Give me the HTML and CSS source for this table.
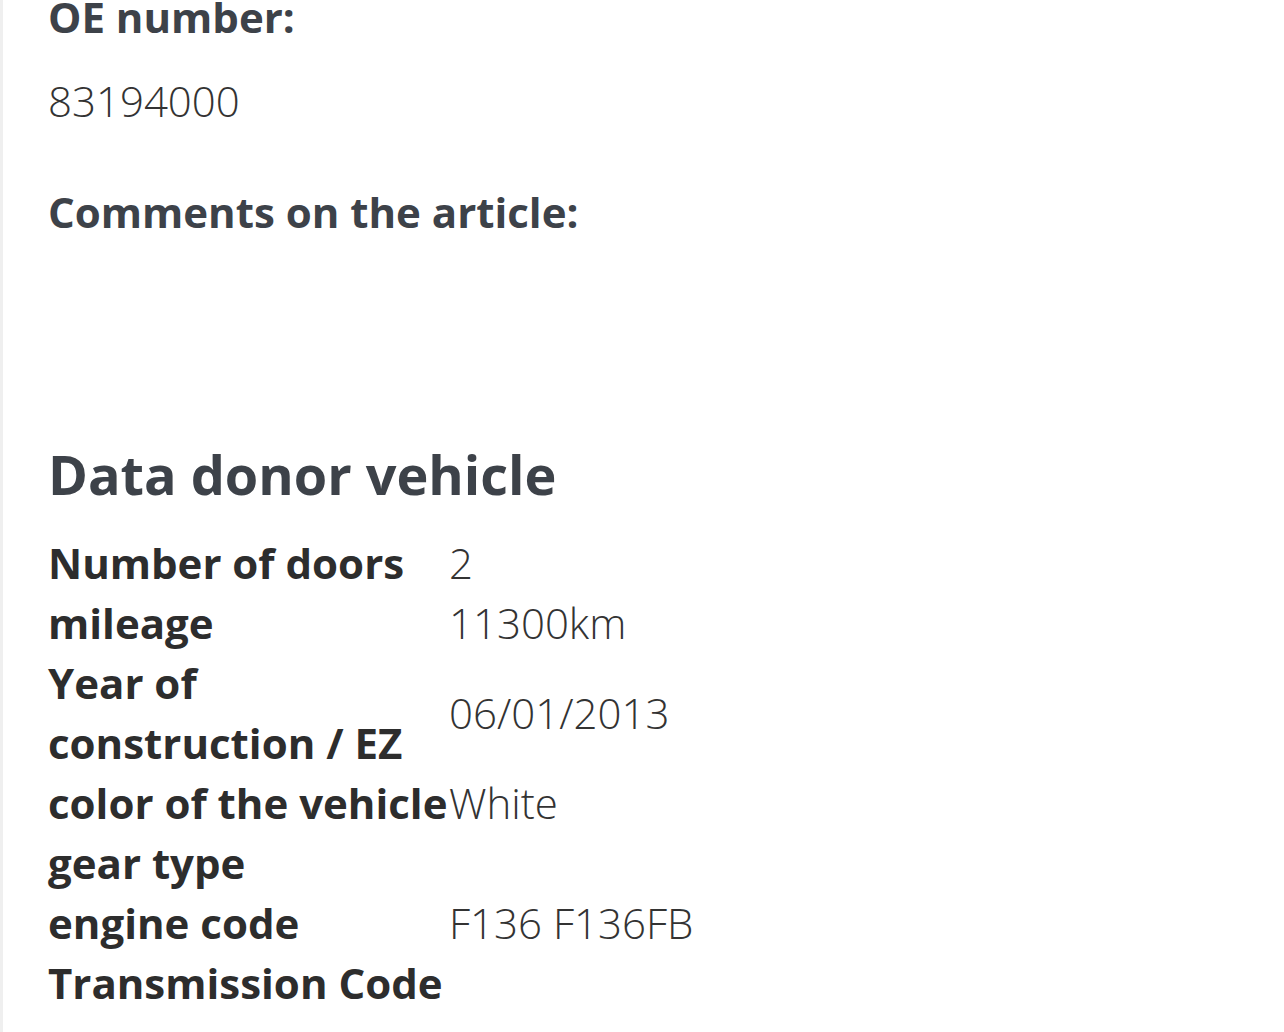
FILE: index.html
```html
<!DOCTYPE html>
<html lang="en">
<head>
    <meta charset="UTF-8">
    <meta name="viewport" content="width=device-width, initial-scale=1.0">
    <title>Article details</title>
    <link rel="stylesheet" href="styles.css">
</head>
<body>
    <div class="article">
        <!-- Article attributes -->
        <div class="field">
            <h3 class="field-label">OE number:</h3>
            <p class="field-value">83194000</p>
        </div>
        <div class="field">
            <h3 class="field-label">Comments on the article:</h3>
            <p class="field-value comments"></p>
        </div>

        <!-- Donor vehicle -->
        <h2 class="section-title">Data donor vehicle</h2>
        <table class="donor-table">
            <tr><th>Number of doors</th><td>2</td></tr>
            <tr><th>mileage</th><td>11300km</td></tr>
            <tr><th>Year of construction / EZ</th><td>06/01/2013</td></tr>
            <tr><th class="nowrap">color of the vehicle</th><td>White</td></tr>
            <tr><th>gear type</th><td></td></tr>
            <tr><th>engine code</th><td>F136 F136FB</td></tr>
            <tr><th>Transmission Code</th><td></td></tr>
        </table>
    </div>
</body>
</html>
```

FILE: styles.css
```css
body {
    margin: 0;
    background-color: #ffffff;
    font-family: 'Open Sans', 'Liberation Sans', sans-serif;
    color: #333333;
    overflow: hidden;
}
.article {
    border-left: 3px solid #efefef;
    padding: 0 40px 0 45px;
    margin-top: -13px;
    min-height: 1100px;
}
.field-label {
    margin: 0;
    font-size: 42px;
    line-height: 60px;
    font-weight: 700;
    color: #3d4249;
}
.field-value {
    margin: 24px 0 51px;
    font-size: 42px;
    line-height: 60px;
    font-weight: 300;
    color: #333333;
}
.comments {
    min-height: 60px;
    margin-bottom: 112px;
}
.section-title {
    margin: 0 0 23px;
    font-size: 54px;
    line-height: 72px;
    font-weight: 700;
    color: #3d4249;
}
.donor-table {
    border-collapse: collapse;
}
.donor-table th {
    width: 401px;
    padding: 0;
    text-align: left;
    vertical-align: middle;
    font-size: 42px;
    line-height: 60px;
    font-weight: 700;
    color: #2d2d2d;
}
.donor-table th.nowrap {
    white-space: nowrap;
}
.donor-table td {
    padding: 0;
    vertical-align: middle;
    font-size: 42px;
    line-height: 60px;
    font-weight: 300;
    color: #333333;
}
```
